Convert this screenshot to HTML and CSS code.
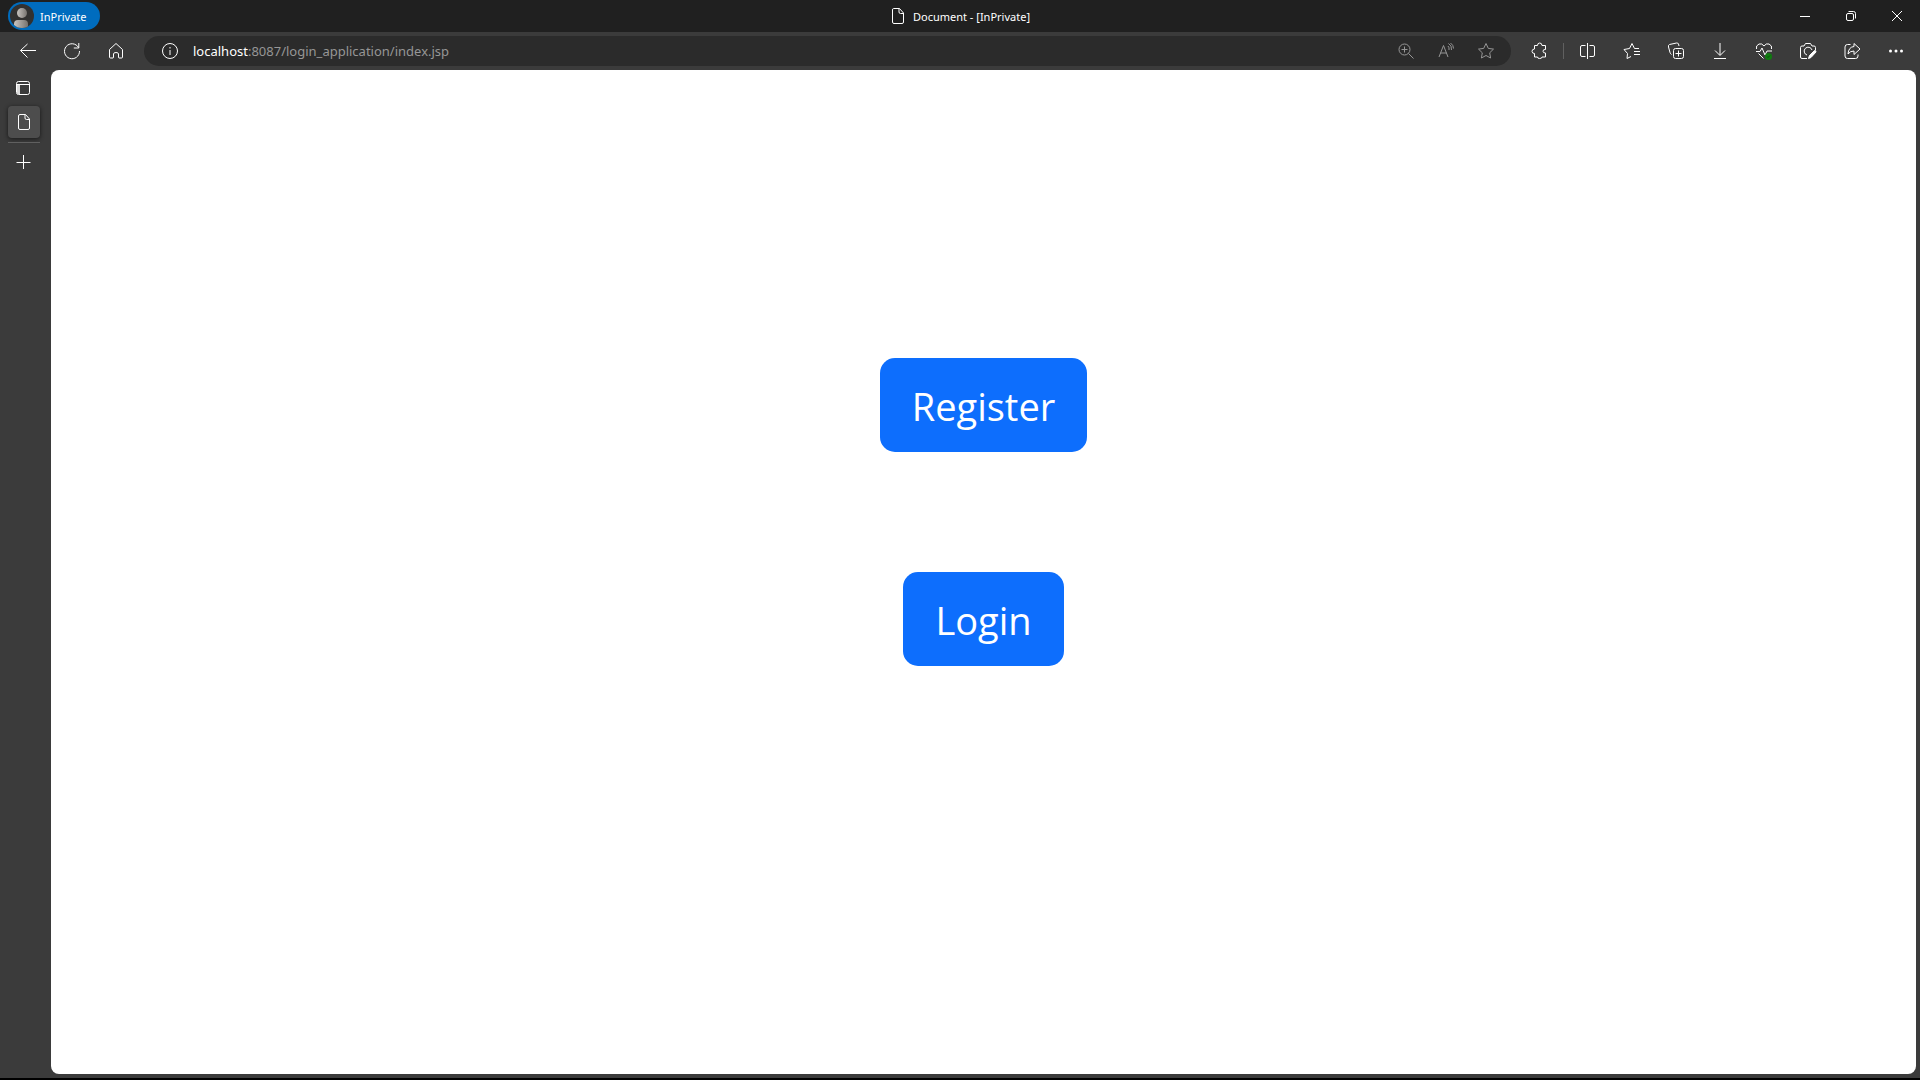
FILE: index.html
```html
<!DOCTYPE html>
<html lang="en">
<head>
<meta charset="utf-8">
<title>Document</title>
<link rel="stylesheet" href="styles.css">
</head>
<body>
<header class="titlebar">
  <div class="title-side">
    <button class="profile" type="button">
      <svg class="avatar" width="24" height="24" viewBox="0 0 24 24">
        <defs>
          <linearGradient id="shade"><stop offset="0" stop-color="#c8c4c0"/><stop offset="1" stop-color="#77736f"/></linearGradient>
          <clipPath id="disc"><circle cx="12" cy="12" r="12"/></clipPath>
        </defs>
        <circle cx="12" cy="12" r="12" fill="#323130"/>
        <g fill="url(#shade)" clip-path="url(#disc)"><circle cx="12" cy="9" r="5"/><path d="M4 24v-4q0-4 4-4h6q4 0 4 4v4z"/></g>
      </svg>
      <span>InPrivate</span>
    </button>
  </div>
  <div class="title">
    <svg class="icon" width="16" height="18" viewBox="0 0 16 18"><path d="M3.5 1.5h6l4 4.500v9q0 1.500-1.500 1.500H4q-1.500 0-1.500-1.500V3q0-1.500 1-1.500zM9 1.500V5q0 1.500 1.500 1.500h3"/></svg>
    <span>Document - [InPrivate]</span>
  </div>
  <div class="title-side window-controls">
    <button type="button" aria-label="Minimize"><svg class="icon" width="12" height="12"><path d="M1 6.500h10"/></svg></button>
    <button type="button" aria-label="Restore"><svg class="icon" width="12" height="12"><rect x="1.500" y="3.500" width="7" height="7" rx="1.500"/><path d="M3.500 1.500H8.500q2 0 2 2v5"/></svg></button>
    <button type="button" aria-label="Close"><svg class="icon" width="12" height="12"><path d="M1 1l10 10M11 1L1 11"/></svg></button>
  </div>
</header>

<nav class="toolbar">
  <button class="tool" type="button" aria-label="Back"><svg class="icon" width="20" height="20"><path d="M18 9.500H2.500M9.500 3L2.500 9.500l7 7"/></svg></button>
  <button class="tool" type="button" aria-label="Refresh"><svg class="icon" width="20" height="20"><path d="M16.500 6.500A7.500 7.500 0 1 0 17.500 10M16.800 2v5h-5"/></svg></button>
  <button class="tool" type="button" aria-label="Home"><svg class="icon" width="20" height="20"><path d="M3.500 8.500L10 2.500l6.500 6V16q0 1-1 1H13q-.5 0-.5-1v-3q0-1.500-2.500-1.500T7.500 13v3q0 1-.5 1H4.500q-1 0-1-1z"/></svg></button>
  <div class="address">
    <button class="info" type="button" aria-label="Site information"><svg class="icon" width="20" height="20"><circle cx="10" cy="10" r="7.500"/><path d="M10 9v5M10 6v1.500"/></svg></button>
    <a class="url" href="#"><span class="host">localhost</span>:8087/login_application/index.jsp</a>
    <button class="address-tool" type="button" aria-label="Zoom"><svg class="icon" width="20" height="20"><circle cx="8.500" cy="8.500" r="5.500"/><path d="M12.500 12.500l5 5M5.500 8.500h6M8.500 5.500v6"/></svg></button>
    <button class="address-tool" type="button" aria-label="Read aloud"><svg class="icon" width="20" height="20"><path d="M3 16L7.500 4.500 12 16M4.500 12h6M12 5q1.500 1.500 1 4M12.500 2.500q3.500 2 3 6.500M14.500 2q3 2 3 5.500"/></svg></button>
    <button class="address-tool" type="button" aria-label="Add to favorites"><svg class="icon" width="20" height="20"><path d="M10 2.500l2.300 4.900 5.200.7-3.800 3.700.9 5.200-4.600-2.500L5.400 17l.9-5.200L2.500 8.100l5.200-.7z"/></svg></button>
  </div>
  <button class="tool" type="button" aria-label="Extensions"><svg class="icon" width="20" height="20"><path d="M5.500 4.500H8.500q0-2.500 2.200-2.500T13 4.500h3.500v4q-2.500-.3-2.500 1.700t2.500 1.800v4H13q0 1.500-2.300 1.500T8.500 16h-3v-3.500q-2.500 0-2.500-2.200T5.500 8z"/></svg></button>
  <span class="divider"></span>
  <button class="tool" type="button" aria-label="Split screen"><svg class="icon" width="20" height="20"><path d="M9.500 2v16M7.500 4.500H4q-1.500 0-1.500 1.500v8q0 1.500 1.500 1.500h3.500M11.500 4.500H15q1.500 0 1.500 1.500v8q0 1.500-1.500 1.500h-3.500"/></svg></button>
  <button class="tool" type="button" aria-label="Favorites"><svg class="icon" width="20" height="20"><path d="M17 7.500h-4.500L10 2.500 7.500 7.500 2 8.500l3.500 4L5 17.500l4-2M12 10.500h6M12 13.500h6"/></svg></button>
  <button class="tool" type="button" aria-label="Collections"><svg class="icon" width="20" height="20"><rect x="7.500" y="7.500" width="10" height="10" rx="2"/><path d="M9.500 12.500h6M12.500 9.500v6M5.500 13.500q-1-.5-1.500-2L2.500 6q-.5-2 1-2.500l7-1.500q1.500-.3 2 1l.5 2"/></svg></button>
  <button class="tool" type="button" aria-label="Downloads"><svg class="icon" width="20" height="20"><path d="M10 2v12M5 9.500l5 5 5-5M4 17.500h12"/></svg></button>
  <button class="tool" type="button" aria-label="Browser essentials"><svg class="icon" width="20" height="20"><path d="M2.500 8Q1.500 4.500 5 3q3-1 5 2 2-3 5-2 3.500 1.500 2.500 5M2 10.500h4l2-3.500 3 7 2-4h5M4.500 12.500l5 5"/><circle cx="14.500" cy="15.500" r="3.500" fill="#107c10" stroke="none"/><path d="M13 15.500l1 1 2-2" stroke="#07500a"/></svg></button>
  <button class="tool" type="button" aria-label="Web capture"><svg class="icon" width="20" height="20"><path d="M9 17.500H4q-1.500 0-1.500-1.500V6.500Q2.500 5 4 5h2l1.500-2.500h5L14 5h2q1.500 0 1.500 1.500V9M14 9a4 4 0 1 0-5 5"/><path d="M10.500 17.500l1-3 5-5q1.500-.5 1.500 1.500l-5 5.500z" fill="#fff"/></svg></button>
  <button class="tool" type="button" aria-label="Share"><svg class="icon" width="20" height="20"><path d="M8.500 3.500h-3Q3 3.500 3 6v9q0 2.500 2.500 2.500h8q2.500 0 2.500-2.500v-1.500M12 2.500L18 8l-6 5.500V10Q8 10 6 13 6.500 6 12 5.500z"/></svg></button>
  <button class="tool" type="button" aria-label="Settings and more"><svg width="20" height="20" fill="#fff"><circle cx="4.500" cy="10" r="1.500"/><circle cx="10" cy="10" r="1.500"/><circle cx="15.500" cy="10" r="1.500"/></svg></button>
</nav>

<div class="workspace">
  <aside class="tabs">
    <button class="tab" type="button" aria-label="Tab actions"><svg class="icon" width="16" height="16"><rect x="0.500" y="1.500" width="13" height="13" rx="2"/><path d="M.5 4.500h13"/><path d="M1 5h3v9H2q-1 0-1-1z" fill="#ddd" stroke="none"/></svg></button>
    <button class="tab active" type="button" aria-label="Document"><svg class="icon" width="16" height="18"><path d="M4 1.500h5.500l4 4.500v9q0 1.500-1.500 1.500H4q-1.500 0-1.500-1.500V3Q2.500 1.500 4 1.500zM9 1.500V5q0 1.500 1.500 1.500h3"/></svg></button>
    <span class="tab-line"></span>
    <button class="tab" type="button" aria-label="New tab"><svg class="icon" width="16" height="16"><path d="M7.500 1v14M.5 8.500h14"/></svg></button>
  </aside>
  <main class="page">
    <button class="action" type="button">Register</button>
    <button class="action" type="button">Login</button>
  </main>
</div>
</body>
</html>
```
FILE: styles.css
```css
* {
  box-sizing: border-box;
}

body {
  margin: 0;
  min-height: 100vh;
  display: flex;
  flex-direction: column;
  background: #3b3b3b;
  border-bottom: 2px solid #000;
  color: #fff;
  font-family: "Noto Sans", "Open Sans", sans-serif;
}

button {
  margin: 0;
  padding: 0;
  border: 0;
  background: none;
  color: inherit;
  font: inherit;
}

svg {
  display: block;
}

.icon {
  fill: none;
  stroke: currentColor;
  stroke-width: 1;
  stroke-linejoin: round;
}

.titlebar {
  display: flex;
  align-items: center;
  height: 32px;
  background: #202020;
  font-size: 11px;
}

.title-side {
  flex: 1;
  display: flex;
  padding-left: 8px;
}

.profile {
  display: flex;
  align-items: center;
  gap: 6px;
  width: 92px;
  height: 28px;
  padding-left: 2px;
  border-radius: 14px;
  background: #006cbe;
}

.title {
  display: flex;
  align-items: center;
  gap: 7px;
}

.window-controls {
  justify-content: flex-end;
}

.window-controls button {
  display: grid;
  place-items: center;
  width: 46px;
  height: 32px;
}

.toolbar {
  display: flex;
  align-items: center;
  height: 38px;
  padding: 0 2px 0 6px;
}

.tool {
  display: grid;
  place-items: center;
  flex: none;
  width: 44px;
  height: 30px;
}

.address {
  flex: 1;
  display: flex;
  align-items: center;
  height: 30px;
  margin: 0 6px;
  padding: 0 5px 0 16px;
  border-radius: 15px;
  background: #2b2b2b;
}

.url {
  flex: 1;
  padding-left: 13px;
  color: #969696;
  font-size: 13px;
  text-decoration: none;
}

.host {
  color: #fff;
}

.address-tool {
  display: grid;
  place-items: center;
  width: 40px;
  height: 30px;
  color: #969696;
}

.divider {
  width: 1px;
  height: 16px;
  margin: 0 2px;
  background: #606060;
}

.workspace {
  flex: 1;
  display: flex;
  padding: 0 4px 4px 0;
}

.tabs {
  display: flex;
  flex-direction: column;
  align-items: center;
  width: 51px;
  padding: 2px 3px 0 0;
}

.tab {
  display: grid;
  place-items: center;
  width: 32px;
  height: 32px;
  border-radius: 4px;
}

.tab.active {
  margin-top: 2px;
  background: #4d4d4d;
  box-shadow: 0 1px 4px #181818;
}

.tab-line {
  width: 32px;
  height: 1px;
  margin: 4px 0 3px;
  background: #606060;
}

.page {
  flex: 1;
  display: flex;
  flex-direction: column;
  align-items: center;
  gap: 120px;
  padding-top: 288px;
  border-radius: 8px;
  background: #fff;
}

.action {
  padding: 18px 32px 16px;
  border-radius: 15px;
  background: #0d6efd;
  font-family: "Open Sans", "Noto Sans", sans-serif;
  font-size: 38px;
  line-height: 60px;
}
```
